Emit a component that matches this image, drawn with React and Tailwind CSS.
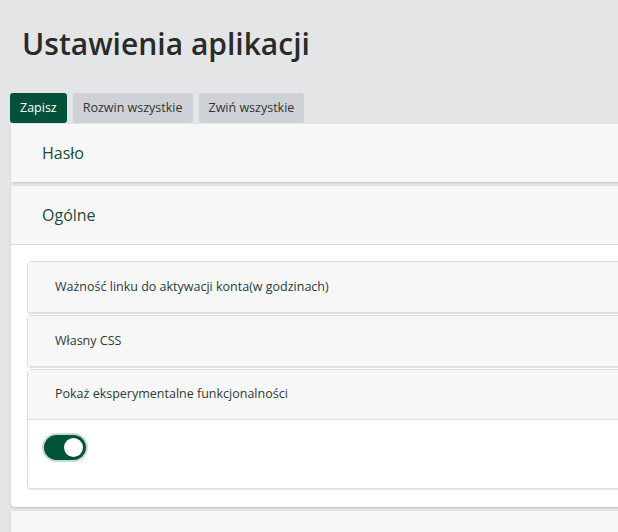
import React from "react";

const font = { fontFamily: '"Open Sans", "Noto Sans", sans-serif' };

function Section({ title, children, open }) {
  return (
    <div className="bg-white shadow-[0_1px_2px_rgba(0,0,0,0.15)] rounded-sm">
      <div
        className={`h-[58px] flex items-center pl-[31px] bg-[#f7f7f8] text-[16px] text-[#1b4a3e] ${
          open ? "h-[59px] border-b border-[#dadada]" : ""
        }`}
      >
        {title}
      </div>
      {open && children}
    </div>
  );
}

function Item({ title, children }) {
  return (
    <div className="border border-[#dedede] rounded-sm bg-white shadow-[0_1px_1px_rgba(0,0,0,0.12)]">
      <div
        className={`h-[50px] flex items-center pl-[27px] bg-[#f7f7f8] text-[12.5px] text-[#2b3b38] ${
          children ? "border-b border-[#dedede]" : ""
        }`}
      >
        {title}
      </div>
      {children}
    </div>
  );
}

function Toggle() {
  return (
    <div className="w-[42px] h-[25px] rounded-full bg-[#03533a] ring-2 ring-[#c6dbd2] flex items-center justify-end pr-[3px]">
      <div className="w-[19px] h-[19px] rounded-full bg-white" />
    </div>
  );
}

export default function App() {
  return (
    <div className="w-[618px] h-[532px] overflow-hidden bg-[#e4e5e7]" style={font}>
      <div className="w-[720px] pl-[10px]">
        <h1 className="pl-[12px] pt-[22px] h-[93px] text-[30px] leading-[44px] text-[#2a2a2a] font-semibold">
          Ustawienia aplikacji
        </h1>
        <div className="flex gap-[6px] h-[31px]">
          <button className="h-[30px] px-[10px] rounded-[3px] bg-[#03513a] text-white text-[12.5px]">
            Zapisz
          </button>
          <button className="h-[30px] px-[10px] rounded-[3px] bg-[#ced2d7] text-[#333] text-[12.5px]">
            Rozwin wszystkie
          </button>
          <button className="h-[30px] px-[10px] rounded-[3px] bg-[#ced2d7] text-[#333] text-[12.5px]">
            Zwiń wszystkie
          </button>
        </div>
        <div className="ml-[1px] flex flex-col gap-[4px]">
          <Section title="Hasło" />
          <Section title="Ogólne" open>
            <div className="pl-[16px] pt-[16px] pb-[18px] flex flex-col gap-[2px]">
              <Item title="Ważność linku do aktywacji konta(w godzinach)" />
              <Item title="Własny CSS" />
              <Item title="Pokaż eksperymentalne funkcjonalności">
                <div className="h-[68px] pl-[16px] pt-[15px]">
                  <Toggle />
                </div>
              </Item>
            </div>
          </Section>
          <Section title="" />
        </div>
      </div>
    </div>
  );
}
